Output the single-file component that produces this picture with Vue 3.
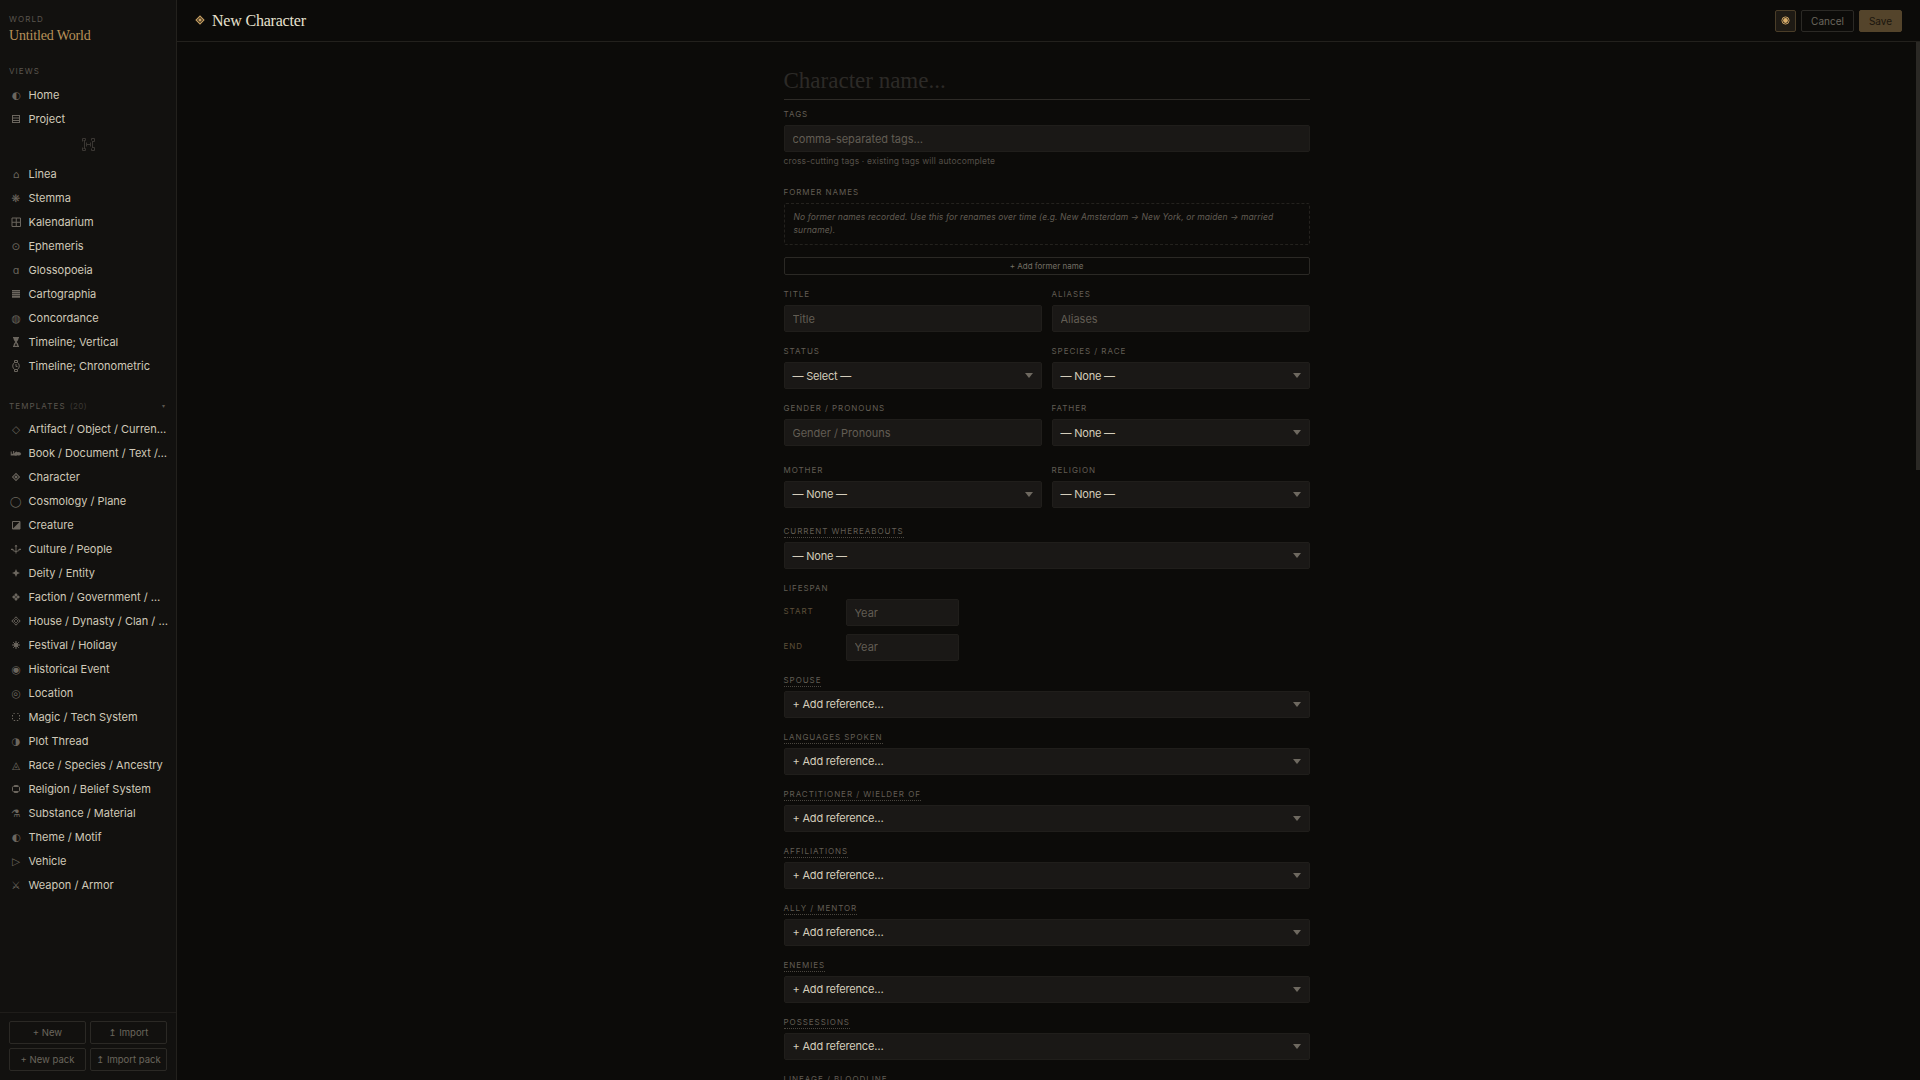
<template>
  <div class="app">
    <aside class="sidebar">
      <div class="world">
        <div class="caption">World</div>
        <div class="world-name">Untitled World</div>
      </div>

      <div class="caption views-caption">Views</div>
      <nav v-for="(group, i) in navGroups" :key="i" class="nav">
        <div v-if="i === 1" class="divider">
          <svg width="13" height="13" viewBox="0 0 13 13" fill="none" stroke="currentColor">
            <path d="M.5 3.500v-3h3v2h-2M9.500 2.500v-2h3v3h-2M.5 9.500v3h3v-2h-2M9.500 10.500v2h3v-3h-2M2.500 3v7M10.500 3v7M4.500 4.500v4M8.500 4.500v4M4.500 6.500h4" />
          </svg>
        </div>
        <div v-if="i === 2" class="caption templates-caption">
          <span>Templates</span>
          <span class="count">({{ group.length }})</span>
          <span class="caret">▾</span>
        </div>
        <a v-for="item in group" :key="item.label" class="nav-item">
          <span class="glyph">
            <svg v-if="shapes[item.icon]" width="12" height="12" viewBox="0 0 12 12">
              <path :d="shapes[item.icon].line" fill="none" stroke="currentColor" />
              <path :d="shapes[item.icon].solid" fill="currentColor" fill-rule="evenodd" />
            </svg>
            <template v-else>{{ item.icon }}</template>
          </span>
          <span class="nav-label">{{ item.label }}</span>
        </a>
      </nav>

      <div class="sidebar-footer">
        <button v-for="action in footerActions" :key="action" class="footer-btn">{{ action }}</button>
      </div>
    </aside>

    <main class="main">
      <header class="topbar">
        <svg class="topbar-icon" width="10" height="10" viewBox="0 0 10 10" fill="currentColor">
          <path fill-rule="evenodd" d="M5 .3 9.700 5 5 9.700.3 5zM5 2 2 5l3 3 3-3z" />
          <path d="M5 3 7 5 5 7 3 5z" />
        </svg>
        <h1 class="topbar-title">New Character</h1>
        <div class="topbar-actions">
          <button class="btn btn-toggle">
            <svg width="9" height="9" viewBox="0 0 9 9">
              <circle cx="4.500" cy="4.500" r="3.600" fill="none" stroke="currentColor" stroke-width=".9" />
              <circle cx="4.500" cy="4.500" r="2.400" fill="currentColor" />
            </svg>
          </button>
          <button class="btn btn-cancel">Cancel</button>
          <button class="btn btn-save">Save</button>
        </div>
      </header>

      <div class="scroll">
        <form class="form" @submit.prevent>
          <input v-model="name" class="name-input" placeholder="Character name..." />

          <div class="field tags-field">
            <label class="label"><span>Tags</span></label>
            <input v-model="tags" class="control" placeholder="comma-separated tags…" />
            <div class="hint">cross-cutting tags · existing tags will autocomplete</div>
          </div>

          <div class="field former">
            <label class="label"><span>Former names</span></label>
            <div class="empty">
              No former names recorded. Use this for renames over time (e.g. New Amsterdam → New York, or maiden → married
              <br />surname).
            </div>
            <button class="add-btn">+ Add former name</button>
          </div>

          <div class="pairs">
            <div v-for="field in pairFields" :key="field.label" class="field" :class="{ spaced: field.spaced }">
              <label class="label"><span>{{ field.label }}</span></label>
              <input v-if="field.type === 'text'" class="control" :placeholder="field.label" />
              <div v-else class="control select">
                <span>{{ field.value }}</span>
                <i class="arrow"></i>
              </div>
            </div>
          </div>

          <div class="field">
            <label class="label linked"><span>Current whereabouts</span></label>
            <div class="control select">
              <span>— None —</span>
              <i class="arrow"></i>
            </div>
          </div>

          <div class="field">
            <label class="label"><span>Lifespan</span></label>
            <div class="span-rows">
              <div v-for="edge in ['Start', 'End']" :key="edge" class="span-row">
                <span class="span-label">{{ edge }}</span>
                <input class="control year" placeholder="Year" />
              </div>
            </div>
          </div>

          <div v-for="title in references" :key="title" class="field">
            <label class="label linked"><span>{{ title }}</span></label>
            <div class="control select">
              <span>+ Add reference…</span>
              <i class="arrow"></i>
            </div>
          </div>
        </form>
        <div class="scrollbar"><div class="thumb"></div></div>
      </div>
    </main>
  </div>
</template>

<script setup>
import { ref } from 'vue'

const name = ref('')
const tags = ref('')

// 12x12 icons, outline and filled parts
const shapes = {
  project: { line: 'M2 2.500h8M2 5h8M2 7.500h8M2 9.500h8M2.500 2v8M9.500 2v8', solid: '' },
  grid: { line: 'M2 2h8.500v8.500H2zM6.250 2v8.500M2 6.250h8.500', solid: '' },
  table: { line: '', solid: 'M2 2h8v1.500H2zM2 4h8v1.500H2zM2 6h8v1.500H2zM2 8h8v1.700H2z' },
  hourglass: { line: '', solid: 'M3 1h6v1.200h-.5Q8.500 4.500 6.700 6 8.500 7.500 8.500 9.800H9V11H3V9.800h.5Q3.500 7.500 5.300 6 3.500 4.500 3.500 2.200H3zM6 7 4.700 9.800h2.600z' },
  watch: { line: 'M4.500 2.500V.5h3v2M4.500 9.500v2h3v-2M6 4v2.500H7.500M4.700 2.500h2.600q2 1 2 3.500t-2 3.500H4.700q-2-1-2-3.500t2-3.500z', solid: '' },
  book: { line: '', solid: 'M.7 4.500h1v2.300h1.400V4h1.100v2.500q2-3 3.300-1.300 3-.5 3.800 1.800-1.500 2.200-4 1.200-1.500 1.200-3 .2H.7z' },
  gem: { line: '', solid: 'M6 1.800 10.200 6 6 10.200 1.800 6zM6 3.200 3.200 6 6 8.800 8.800 6zM6 4.200 7.800 6 6 7.800 4.200 6z' },
  creature: { line: 'M2.500 2.500h7.500V10H2.500z', solid: 'M10 2.500V10H2.500z' },
  culture: { line: 'M2 5.500q.5 3 4 3t4-3M6 2v8.500M1 6.500h2.500M8.500 6.500H11', solid: 'M4.500 3.500 6 1.800 7.500 3.500z' },
  star: { line: '', solid: 'M6 2 7.200 4.800 10 6 7.200 7.200 6 10 4.800 7.200 2 6 4.800 4.800z' },
  faction: { line: '', solid: 'M6 2 7.800 3.900 6 5.700 4.200 3.900zM6 6.300 7.800 8.100 6 10 4.200 8.100zM3.900 4.200 5.700 6 3.900 7.800 2 6zM8.100 4.200 10 6 8.100 7.800 6.300 6z' },
  house: { line: 'M6 1.800 7.500 3.300 6 4.800 4.500 3.300zM6 7.200l1.500 1.500L6 10.200 4.500 8.700zM3.300 4.500 4.800 6 3.300 7.500 1.800 6zM8.700 4.500 10.200 6 8.700 7.500 7.200 6z', solid: '' },
  festival: { line: 'M6 2v8M2 6h8M3.200 3.200l5.600 5.600M8.800 3.200 3.200 8.800', solid: 'M6 3.500 8.500 6 6 8.500 3.500 6z' },
  hexagon: { line: 'M4.200 2.500h3.600L9.500 4.200v3.600L7.800 9.500H4.200L2.500 7.800V4.200zM4 3.500h4M4 8.500h4', solid: '' },
  magic: { line: 'M3.500 2.500h1.200M7.300 2.500h1.200M2.500 4v1.500M9.500 4v1.500M2.500 7v1.300M9.500 7v1.300M3.700 9.500h1.500M6.800 9.500h1.500', solid: '' }
}

const navGroups = [
  [
    { icon: '◐', label: 'Home' },
    { icon: 'project', label: 'Project' }
  ],
  [
    { icon: '⌂', label: 'Linea' },
    { icon: '❋', label: 'Stemma' },
    { icon: 'grid', label: 'Kalendarium' },
    { icon: '⊙', label: 'Ephemeris' },
    { icon: 'ɑ', label: 'Glossopoeia' },
    { icon: 'table', label: 'Cartographia' },
    { icon: '◍', label: 'Concordance' },
    { icon: 'hourglass', label: 'Timeline; Vertical' },
    { icon: 'watch', label: 'Timeline; Chronometric' }
  ],
  [
    { icon: '◇', label: 'Artifact / Object / Curren…' },
    { icon: 'book', label: 'Book / Document / Text /…' },
    { icon: 'gem', label: 'Character' },
    { icon: '◯', label: 'Cosmology / Plane' },
    { icon: 'creature', label: 'Creature' },
    { icon: 'culture', label: 'Culture / People' },
    { icon: 'star', label: 'Deity / Entity' },
    { icon: 'faction', label: 'Faction / Government / …' },
    { icon: 'house', label: 'House / Dynasty / Clan / …' },
    { icon: 'festival', label: 'Festival / Holiday' },
    { icon: '◉', label: 'Historical Event' },
    { icon: '◎', label: 'Location' },
    { icon: 'magic', label: 'Magic / Tech System' },
    { icon: '◑', label: 'Plot Thread' },
    { icon: '◬', label: 'Race / Species / Ancestry' },
    { icon: 'hexagon', label: 'Religion / Belief System' },
    { icon: '⚗', label: 'Substance / Material' },
    { icon: '◐', label: 'Theme / Motif' },
    { icon: '▷', label: 'Vehicle' },
    { icon: '⚔', label: 'Weapon / Armor' }
  ]
]

const footerActions = ['+ New', '↥ Import', '+ New pack', '↥ Import pack']

const pairFields = [
  { label: 'Title', type: 'text' },
  { label: 'Aliases', type: 'text' },
  { label: 'Status', value: '— Select —' },
  { label: 'Species / Race', value: '— None —' },
  { label: 'Gender / Pronouns', type: 'text', spaced: true },
  { label: 'Father', value: '— None —', spaced: true },
  { label: 'Mother', value: '— None —', spaced: true },
  { label: 'Religion', value: '— None —', spaced: true }
]

const references = [
  'Spouse',
  'Languages spoken',
  'Practitioner / Wielder of',
  'Affiliations',
  'Ally / Mentor',
  'Enemies',
  'Possessions',
  'Lineage / Bloodline'
]
</script>

<style>
body {
  background: #0c0b09;
  overflow: hidden;
}
</style>

<style scoped>
.app {
  display: flex;
  height: 100vh;
  background: #0c0b09;
  color: #d4cdbb;
  font-family: 'Inter', 'DejaVu Sans', sans-serif;
  font-size: 11px;
}

button,
input {
  font-family: inherit;
  box-sizing: border-box;
  outline: none;
}

.sidebar {
  width: 177px;
  flex: none;
  box-sizing: border-box;
  display: flex;
  flex-direction: column;
  background: #12110f;
  border-right: 1px solid #23211d;
}

.caption {
  padding: 0 9px;
  font-size: 8px;
  line-height: 12px;
  letter-spacing: 1.1px;
  text-transform: uppercase;
  color: #5a554e;
}

.world {
  padding-top: 13px;
}

.world-name {
  padding: 1px 9px 0;
  font-family: 'Liberation Serif', serif;
  font-size: 14px;
  line-height: 20px;
  letter-spacing: -0.15px;
  color: #b8915a;
}

.views-caption {
  margin: 19px 0 6px;
}

.nav-item {
  display: flex;
  align-items: center;
  height: 24px;
  padding: 0 8px 0 9px;
}

.glyph {
  width: 14px;
  flex: none;
  display: flex;
  justify-content: center;
  margin-right: 5.500px;
  font-family: 'DejaVu Sans', sans-serif;
  font-size: 10.500px;
  line-height: 12px;
  color: #6b665e;
}

.nav-label {
  white-space: nowrap;
  line-height: 18px;
  color: #d0c9b8;
}

.divider {
  height: 31px;
  padding-bottom: 5px;
  box-sizing: border-box;
  display: flex;
  justify-content: center;
  align-items: center;
  color: #3a3733;
}

.templates-caption {
  display: flex;
  margin: 22px 0 5px;
}

.count {
  margin-left: 4px;
  letter-spacing: 0.4px;
  color: #3b3833;
}

.caret {
  margin-left: auto;
  margin-right: 2px;
  font-size: 6px;
  letter-spacing: 0;
}

.sidebar-footer {
  margin-top: auto;
  display: grid;
  grid-template-columns: 1fr 1fr;
  gap: 4px;
  padding: 8px 9px 9px;
  border-top: 1px solid #1f1d1a;
}

.footer-btn {
  height: 23px;
  padding: 0;
  border: 1px solid #2b2925;
  border-radius: 2px;
  background: transparent;
  color: #6b665d;
  font-size: 9.500px;
  white-space: nowrap;
}

.main {
  flex: 1;
  min-width: 0;
  display: flex;
  flex-direction: column;
}

.topbar {
  height: 42px;
  flex: none;
  box-sizing: border-box;
  display: flex;
  align-items: center;
  padding: 0 18px;
  border-bottom: 1px solid #23211d;
}

.topbar-icon {
  margin: 0 7px 1px 0;
  color: #c9a063;
}

.topbar-title {
  margin: 0;
  font-family: 'Liberation Serif', serif;
  font-size: 16px;
  font-weight: 400;
  letter-spacing: -0.2px;
  color: #e8e2d0;
}

.topbar-actions {
  display: flex;
  gap: 5px;
  margin-left: auto;
}

.btn {
  height: 22px;
  padding: 0;
  border: 1px solid #2b2925;
  border-radius: 2px;
  background: transparent;
  color: #6b665d;
  font-size: 10px;
}

.btn-toggle {
  width: 21px;
  display: flex;
  align-items: center;
  justify-content: center;
  border-color: #4a3d28;
  background: #1e1a14;
  color: #d6ab69;
}

.btn-cancel {
  width: 53px;
}

.btn-save {
  width: 43px;
  border-color: #54442b;
  background: #54442b;
  color: #1a150d;
}

.scroll {
  flex: 1;
  min-height: 0;
  display: flex;
  overflow: hidden;
}

.form {
  width: 526px;
  margin: 0 auto;
}

.name-input {
  display: block;
  width: 100%;
  height: 42px;
  margin-top: 16px;
  padding: 4px 0 0;
  border: 0;
  border-bottom: 1px solid #2e2b27;
  background: transparent;
  color: #e0dac8;
  font-family: 'Liberation Serif', serif;
  font-size: 23px;
}

.name-input::placeholder {
  color: #2c2a27;
  opacity: 1;
}

.field {
  margin-bottom: 11px;
}

.label {
  display: block;
  height: 16px;
  margin-bottom: 3px;
  font-size: 8px;
  line-height: 16px;
  letter-spacing: 0.950px;
  text-transform: uppercase;
  color: #625d54;
}

.linked span {
  padding-bottom: 1px;
  border-bottom: 1px dotted #4a463f;
}

.control {
  display: block;
  width: 100%;
  height: 27px;
  padding: 0 8px;
  box-sizing: border-box;
  border: 1px solid #201e1b;
  border-radius: 2px;
  background: #1a1816;
  color: #d4cdbb;
  font-size: 11px;
}

.control::placeholder {
  color: #625d54;
  opacity: 1;
}

.select {
  display: flex;
  align-items: center;
  justify-content: space-between;
  letter-spacing: -0.2px;
}

.arrow {
  width: 0;
  height: 0;
  border: 4px solid transparent;
  border-top: 5px solid #6e6960;
  border-bottom: 0;
}

.tags-field {
  margin-top: 6px;
  margin-bottom: 0;
}

.hint {
  margin-top: 3px;
  font-size: 8.500px;
  line-height: 12px;
  letter-spacing: 0.150px;
  color: #544f48;
}

.former {
  margin-top: 17px;
}

.empty {
  height: 42px;
  padding: 7px 9px;
  box-sizing: border-box;
  border: 1px dashed #24221e;
  border-radius: 2px;
  font-size: 8.500px;
  font-style: italic;
  line-height: 13px;
  letter-spacing: 0.110px;
  white-space: nowrap;
  color: #625d54;
}

.add-btn {
  display: block;
  width: 100%;
  height: 18px;
  margin-top: 12px;
  padding: 0;
  border: 1px solid #2b2925;
  border-radius: 2px;
  background: transparent;
  color: #746f65;
  font-size: 8px;
}

.pairs {
  display: grid;
  grid-template-columns: 1fr 1fr;
  column-gap: 10px;
}

.spaced {
  margin-bottom: 15.500px;
}

.span-rows {
  display: flex;
  flex-direction: column;
  gap: 7.500px;
}

.span-row {
  display: flex;
}

.span-label {
  width: 62px;
  font-size: 8px;
  line-height: 24px;
  letter-spacing: 0.950px;
  text-transform: uppercase;
  color: #5e5039;
}

.year {
  width: 113px;
}

.scrollbar {
  width: 4px;
  flex: none;
}

.thumb {
  height: 428px;
  background: #2b2925;
}
</style>
